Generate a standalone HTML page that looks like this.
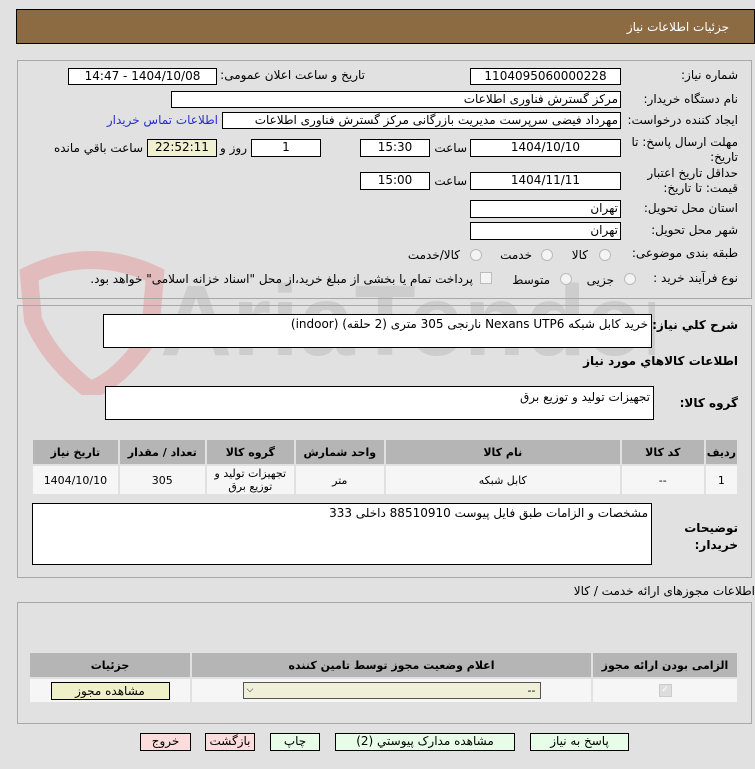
<!DOCTYPE html>
<html><head><meta charset="utf-8"><style>
body{margin:0;width:755px;height:769px;background:#e1e1e1;font-family:"DejaVu Sans","Liberation Sans",sans-serif;font-size:11px;color:#000;position:relative;overflow:hidden}
.a{position:absolute}
.r{position:absolute;direction:rtl;text-align:right;white-space:nowrap}
.box{position:absolute;background:#fff;border:1px solid #000;box-sizing:border-box;text-align:center;line-height:15px;font-size:12px;white-space:nowrap;direction:rtl}
.panel{position:absolute;border:1px solid #a8a8a8;box-sizing:border-box}
.rad{position:absolute;width:12px;height:12px;border-radius:50%;border:1px solid #bbb;background:#f4f4f4;box-sizing:border-box}
.btn{position:absolute;border:1px solid #000;box-sizing:border-box;text-align:center;line-height:15px;font-size:12px;direction:rtl}
table{border-collapse:separate;border-spacing:2px;position:absolute;direction:rtl;font-size:11px}
th{background:#b5b5b5;font-weight:bold;height:22px}
td{background:#f6f6f6;text-align:center}
</style></head><body>
<div class="a" style="left:16px;top:9px;width:739px;height:35px;background:#8c6b42;border:1px solid #000;box-sizing:border-box"></div>
<div class="r" style="right:26px;top:20px;color:#fff;font-size:12px">جزئیات اطلاعات نیاز</div>

<svg class="a" style="left:15px;top:245px" width="640" height="150">
<path d="M14 30 Q75 0 140 30 L135 90 Q105 135 75 145 Q35 115 18 75 Z" fill="none" stroke="#e2b3b3" stroke-width="18" opacity=".8"/>
<text x="145" y="110" font-size="100" font-weight="bold" fill="#c9c9c9" font-family="Liberation Sans" opacity=".8">AriaTender.net</text>
</svg>

<div class="panel" style="left:17px;top:60px;width:735px;height:239px"></div>
<div class="panel" style="left:17px;top:305px;width:735px;height:273px"></div>

<div class="r" style="right:17px;top:68px;font-size:12px">شماره نیاز:</div>
<div class="box" style="left:470px;top:68px;width:151px;height:17px">1104095060000228</div>
<div class="r" style="right:390px;top:68px;font-size:12px">تاریخ و ساعت اعلان عمومی:</div>
<div class="box" style="left:68px;top:68px;width:149px;height:17px">1404/10/08 - 14:47</div>

<div class="r" style="right:17px;top:92px;font-size:12px">نام دستگاه خریدار:</div>
<div class="box" style="left:171px;top:91px;width:450px;height:17px;text-align:right;padding-right:2px">مرکز گسترش فناوری اطلاعات</div>

<div class="r" style="right:17px;top:113px;font-size:12px">ایجاد کننده درخواست:</div>
<div class="box" style="left:222px;top:112px;width:399px;height:17px;text-align:right;padding-right:2px">مهرداد فیضی سرپرست مدیریت بازرگانی مرکز گسترش فناوری اطلاعات</div>
<div class="r" style="right:537px;top:113px;color:#2b2bd0;font-size:12px">اطلاعات تماس خریدار</div>

<div class="r" style="right:17px;top:135px;font-size:12px;line-height:15px">مهلت ارسال پاسخ: تا<br>تاریخ:</div>
<div class="box" style="left:470px;top:139px;width:151px;height:18px">1404/10/10</div>
<div class="r" style="right:288px;top:141px;font-size:12px">ساعت</div>
<div class="box" style="left:360px;top:139px;width:70px;height:18px">15:30</div>
<div class="box" style="left:251px;top:139px;width:70px;height:18px">1</div>
<div class="r" style="right:508px;top:141px;font-size:12px">روز و</div>
<div class="box" style="left:147px;top:139px;width:70px;height:18px;background:#f0f0d0">22:52:11</div>
<div class="r" style="right:612px;top:141px;font-size:12px">ساعت باقي مانده</div>

<div class="r" style="right:17px;top:166px;font-size:12px;line-height:15px">حداقل تاریخ اعتبار<br>قیمت: تا تاریخ:</div>
<div class="box" style="left:470px;top:172px;width:151px;height:18px">1404/11/11</div>
<div class="r" style="right:288px;top:174px;font-size:12px">ساعت</div>
<div class="box" style="left:360px;top:172px;width:70px;height:18px">15:00</div>

<div class="r" style="right:17px;top:201px;font-size:12px">استان محل تحویل:</div>
<div class="box" style="left:470px;top:200px;width:151px;height:18px;text-align:right;padding-right:2px">تهران</div>
<div class="r" style="right:17px;top:223px;font-size:12px">شهر محل تحویل:</div>
<div class="box" style="left:470px;top:222px;width:151px;height:18px;text-align:right;padding-right:2px">تهران</div>

<div class="r" style="right:17px;top:246px;font-size:12px">طبقه بندی موضوعی:</div>
<div class="rad" style="left:599px;top:249px"></div><div class="r" style="right:167px;top:248px;font-size:12px">کالا</div>
<div class="rad" style="left:541px;top:249px"></div><div class="r" style="right:223px;top:248px;font-size:12px">خدمت</div>
<div class="rad" style="left:470px;top:249px"></div><div class="r" style="right:295px;top:248px;font-size:12px">کالا/خدمت</div>

<div class="r" style="right:17px;top:271px;font-size:12px">نوع فرآیند خرید :</div>
<div class="rad" style="left:624px;top:273px"></div><div class="r" style="right:141px;top:273px;font-size:12px">جزیی</div>
<div class="rad" style="left:560px;top:273px"></div><div class="r" style="right:205px;top:273px;font-size:12px">متوسط</div>
<div class="a" style="left:480px;top:272px;width:12px;height:12px;border:1px solid #bbb;background:#f4f4f4;box-sizing:border-box"></div>
<div class="r" style="right:282px;top:272px;font-size:12px">پرداخت تمام یا بخشی از مبلغ خرید،از محل "اسناد خزانه اسلامی" خواهد بود.</div>

<div class="r" style="right:17px;top:318px;font-size:12px;font-weight:bold">شرح کلي نیاز:</div>
<div class="box" style="left:103px;top:314px;width:549px;height:34px;text-align:right;padding-right:3px;line-height:18px">خرید کابل شبکه Nexans UTP6 نارنجی 305 متری (2 حلقه) (indoor)</div>
<div class="r" style="right:17px;top:354px;font-size:12px;font-weight:bold">اطلاعات کالاهاي مورد نیاز</div>

<div class="r" style="right:17px;top:396px;font-size:12px;font-weight:bold">گروه کالا:</div>
<div class="box" style="left:105px;top:386px;width:549px;height:34px;text-align:right;padding-right:3px;line-height:20px">تجهیزات تولید و توزیع برق</div>

<table style="left:31px;top:438px;width:708px">
<tr><th style="width:27px">ردیف</th><th style="width:80px">کد کالا</th><th style="width:232px">نام کالا</th><th style="width:86px">واحد شمارش</th><th style="width:85px">گروه کالا</th><th style="width:83px">تعداد / مقدار</th><th>تاریخ نیاز</th></tr>
<tr style="height:27px"><td>1</td><td>--</td><td>کابل شبکه</td><td>متر</td><td style="line-height:13px">تجهیزات تولید و<br>توزیع برق</td><td>305</td><td>1404/10/10</td></tr>
</table>

<div class="r" style="right:17px;top:520px;font-size:12px;font-weight:bold;line-height:17px">توضیحات<br>خریدار:</div>
<div class="box" style="left:32px;top:503px;width:620px;height:62px;text-align:right;padding-right:3px;line-height:18px">مشخصات و الزامات طبق فایل پیوست 88510910 داخلی 333</div>

<div class="r" style="right:0px;top:584px;font-size:12px">اطلاعات مجوزهای ارائه خدمت / کالا</div>
<div class="panel" style="left:17px;top:602px;width:735px;height:122px"></div>
<table style="left:28px;top:651px;width:711px">
<tr><th style="width:142px">الزامی بودن ارائه مجوز</th><th style="width:397px">اعلام وضعیت مجوز توسط تامین کننده</th><th>جزئیات</th></tr>
<tr style="height:23px"><td><div style="width:11px;height:11px;background:#ddd;border:1px solid #ccc;margin:auto;color:#fff;font-size:9px;line-height:11px">✓</div></td>
<td><div style="width:298px;height:17px;margin:auto;background:#f0f0d8;border:1px solid #555;box-sizing:border-box;position:relative;text-align:right;padding-right:4px;line-height:15px">--<span style="position:absolute;left:3px;top:0;font-size:9px">⌵</span></div></td>
<td><div style="width:119px;height:18px;margin:auto;background:#f0f0c8;border:1px solid #000;box-sizing:border-box;line-height:16px;font-size:12px">مشاهده مجوز</div></td></tr>
</table>

<div class="btn" style="left:140px;top:733px;width:51px;height:18px;background:#fcdcdc">خروج</div>
<div class="btn" style="left:205px;top:733px;width:50px;height:18px;background:#fcdcdc">بازگشت</div>
<div class="btn" style="left:270px;top:733px;width:50px;height:18px;background:#e8fde8">چاپ</div>
<div class="btn" style="left:335px;top:733px;width:180px;height:18px;background:#e8fde8">مشاهده مدارک پیوستي (2)</div>
<div class="btn" style="left:530px;top:733px;width:99px;height:18px;background:#e8fde8">پاسخ به نیاز</div>
</body></html>
